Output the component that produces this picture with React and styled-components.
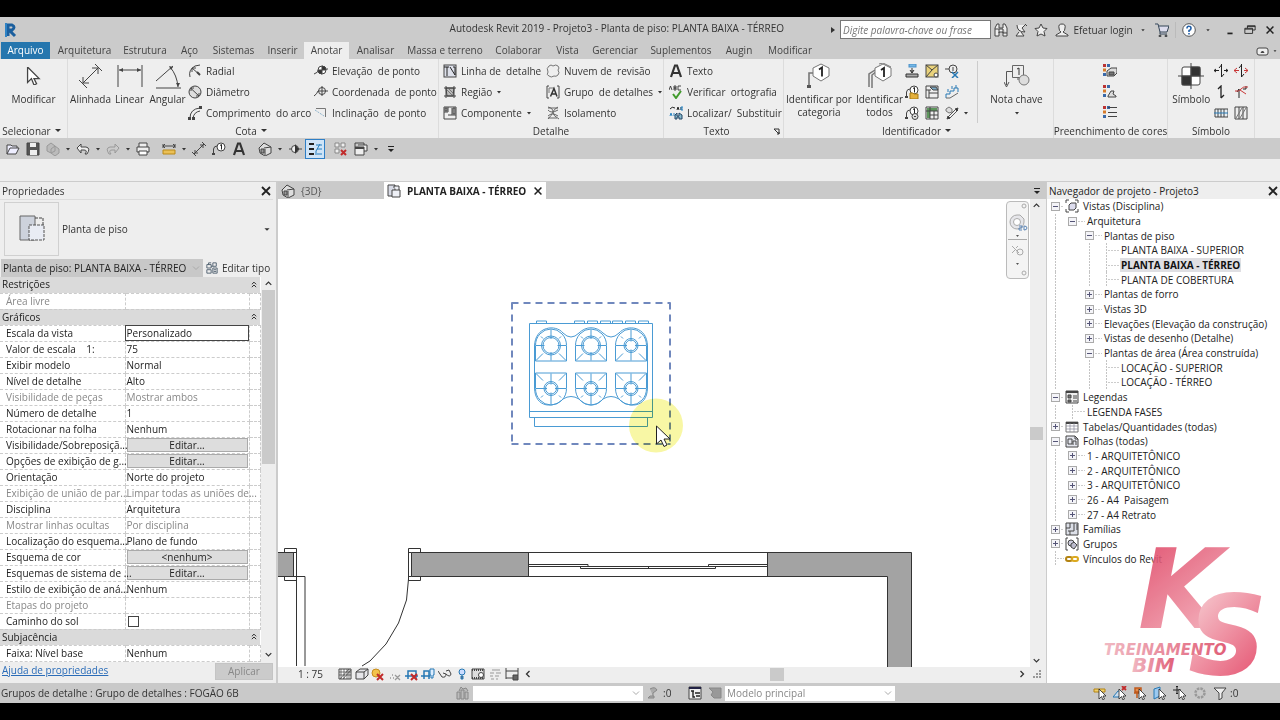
import React from 'react'
import styled, { createGlobalStyle, css } from 'styled-components'

const GlobalStyle = createGlobalStyle`
  * { box-sizing: border-box; }
  body { margin: 0; background: #000; }
  button, input, select { font: inherit; color: inherit; }
`
const Window = styled.div`
  display: flex;
  flex-direction: column;
  min-height: 100vh;
  padding: 17px 0;
  background: #000;
  color: #333;
  font: 10px/14px 'Open Sans', 'Noto Sans', sans-serif;
`
const Svg = styled.svg`
  display: block;
  flex: none;
  fill: none;
  stroke: #444;
`
const plainButton = css`
  border: 0;
  padding: 0;
  background: none;
  white-space: pre;
`

/* ---------- icons ---------- */

const node = <><path d="M1.500 12V7Q2 4 5 4" /><path d="M0 11h3v2H0z" fill="#444" stroke="none" /><circle cx="9" cy="5" r="4" fill="#fff" /><path d="M9.500 7.500v-5L8 3.500" stroke="#222" /></>
const swatches = <g stroke="none"><path d="M0 0h3v3H0z" fill="#b33" /><path d="M4 0h3v3H4zM0 9h3v3H0z" fill="#3968a8" /><path d="M0 4.500h3v3H0z" fill="#d67b2b" /></g>
const pointer = <path d="M6 3v10l2.500-2.500L10 14l1.500-1-1.500-3h3z" fill="#fff" stroke="#222" strokeWidth=".8" />

const icons = {
  down: <path d="M4 6h6L7 9z" fill="#333" stroke="none" />,
  tiny: <path d="M5 6h4L7 8.500z" fill="#333" stroke="none" />,
  close: <path d="M3 3l8 8M11 3l-8 8" stroke="#222" strokeWidth="1.800" />,
  chevDown: <path d="M4 5.500l3 3 3-3" stroke="#333" strokeWidth="1.300" />,
  chevUp: <path d="M4 8.500l3-3 3 3" stroke="#333" strokeWidth="1.300" />,
  chevLeft: <path d="M8.500 4l-3 3 3 3" stroke="#333" strokeWidth="1.300" />,
  chevRight: <path d="M5.500 4l3 3-3 3" stroke="#333" strokeWidth="1.300" />,
  paleDown: <path d="M4 5.500l3 3 3-3" stroke="#aaa" />,
  collapse: <path d="M4 6l3-3 3 3M4 10l3-3 3 3" stroke="#222" strokeWidth="1.300" />,
  play: <path d="M5 4l4 3-4 3z" fill="#333" stroke="none" />,
  cursor: <path d="M2 0v12l3-3 2 5 2-1-2-4h4z" fill="#fff" />,
  radial: <><path d="M2 13Q0 6 7 2l5-1M12 11L4 4M4 8V4h4" /><path d="M9 8l3 3" strokeWidth="2" /></>,
  diameter: <><circle cx="7" cy="7" r="6" fill="#ddd" /><path d="M2.500 3L11 11M3 6V3h3M11 8v3H8" /></>,
  arc: <><path d="M2 12Q2 3 12 2M5 12Q6 6 12 5" /><path d="M0 11h3v3H0zM4 11h3v3H4zM11 0h3v3h-3z" fill="#444" stroke="none" /></>,
  elevation: <><path d="M0 10Q4 9 5 5h9" /><circle cx="8" cy="6" r="4" fill="#fff" /><path d="M8 2v4h4a4 4 0 0 0-4-4zM8 10V6H4a4 4 0 0 0 4 4z" fill="#333" /></>,
  coord: <><path d="M0 11Q3 9 4 6h10M8 1v10" /><circle cx="8" cy="6" r="3.500" /></>,
  slope: <><path d="M1 4l9 6" stroke="#8fb4cc" strokeDasharray="2 1" /><path d="M2 2.500h9.500V11" stroke="#777" /></>,
  detailLine: <><rect x="1" y="1" width="12" height="12" fill="#dde0ea" /><path d="M1 3h5M4 3v9M7 3l5 8M10 3h2v8" stroke="#222" /></>,
  region: <><path d="M3 3h8l-1 8H4z" fill="#bbb" /><path d="M1 3h12M1 11h12M3 1v12M11 1v12" /><path d="M4 5l5 5M6 4l4 4" stroke="#777" /></>,
  component: <><path d="M1 1h12v12H1zM5 1v5H1M13 9H5M9 2v7" /><path d="M10 2h2v6h-2zM2 2h2v3H2z" fill="#bbb" /></>,
  cloud: <path d="M3 2q2-2 4 0 3-2 5 0 2 2 0 4 2 3 0 5-2 2-4 1-3 2-5 0-3-1-1-4Q0 4 3 2z" fill="#eee" stroke="#777" />,
  group: <><path d="M3 1H1v12h2M11 1h2v12h-2" /><path d="M3 8V3h5" stroke="#777" /><path d="M4.500 11.500L8 3.500l3 8M6 9h4" stroke="#333" strokeWidth="1.500" /></>,
  isolation: <path d="M2 1q5 1 5 5T13 13M2 4q3 4 10 0M2 10q4-4 10 0M12 1q-4 2-5 5T2 13M2 2h10M2 12h9" stroke="#666" />,
  letter: <><path d="M2 13L6 1.500h2L12 13M4 9h6" stroke="#333" strokeWidth="2.200" /></>,
  spell: <><path d="M0 5l1.500-4L3 5M5 1v4h2V3H5h2V1zM12 1H9v4h3" stroke="#333" strokeWidth=".9" /><path d="M4 9l3 4 5-7" stroke="#419b2c" strokeWidth="2" /></>,
  replace: <><path d="M1 3q2-3 5-1M8 4l1-3 1 3M12 1v3" stroke="#222" /><path d="M1 10l1-3 1 3M5 7v3M12 1h2v3h-2z" stroke="#2d87c4" /><path d="M6 13V9l2-2v3h2V7l3 2v4h-3v-2H8v2z" fill="#8bc" stroke="#246" /></>,
  tagCategory: <><path d="M3 23V10h6" strokeWidth="1.600" stroke="#777" /><path d="M15 1l8 4v8l-8 5-8-5V5z" fill="#fff" stroke="#777" /><path d="M13 6.500l3-2v9" stroke="#222" strokeWidth="1.800" /><path d="M1 22h4v3H1z" fill="#555" stroke="none" /></>,
  tagAll: <><path d="M2 24V11l6-4M5 25V12l5-4" strokeWidth="1.500" stroke="#777" /><path d="M16 1l8 4v8l-8 5-8-5V5zM12 1l4-1 8 4" fill="#fff" stroke="#777" /><path d="M14 7l3-2v9" stroke="#222" strokeWidth="1.800" /></>,
  keynote: <><path d="M2.500 22V8.500H8M0 19l2.500 5L5 19M14 14v3" stroke="#555" /><path d="M8.500 2.500h11v12h-11z" fill="#eee" stroke="#666" /><path d="M13 6l2-1v7" stroke="#333" /><circle cx="20" cy="17" r="5" fill="#ddd" stroke="#777" /></>,
  aligned: <path d="M5 20L20 5M5 14v6h6M14 5h6v6M1 17l8 8M17 1l7 7" />,
  linear: <><path d="M1 2v22M25 2v22M2 7h22" /><path d="M2 7l4-2v4zM24 7l-4-2v4z" fill="#444" stroke="none" /></>,
  angular: <><path d="M1 18L18 3M1 25h25M15 4q7 8 8 20" /><path d="M14 3l4 1-2 3zM23 24l-2-4h4z" fill="#444" stroke="none" /></>,
  beam: <><rect x="4" y="0" width="7" height="3" fill="#74b7e5" stroke="#4a90c8" /><path d="M7 4v5M5 6l2 3 2-3M1 10h12v3H1z" fill="#aaa" stroke="#333" /></>,
  material: <><rect x="1" y="1" width="12" height="12" fill="#e9d27b" /><path d="M1 1l6 5 6-5M1 13l6-7" /><circle cx="11" cy="11" r="2" fill="#fff" /></>,
  multi: <><path d="M0 5h5" /><circle cx="8" cy="5" r="4" fill="#eee" /><path d="M8 3v4" /><path d="M7 8l6 6M13 8l-6 6" stroke="#2678b4" strokeWidth="1.500" /></>,
  tagFolder: <>{node}<path d="M5 8h3l1 1h4v5H5z" fill="#e4b03c" stroke="#a67a15" /></>,
  tagSearch: <>{node}<circle cx="10" cy="10.500" r="3" fill="#ddd" /><path d="M9 10.500h2" /></>,
  area: <><path d="M1 1h12v12H1zM1 5h5M4 5v8M4 8h9" /><path d="M5 2h6l2 3H8z" fill="#7cabc8" /></>,
  schedule: <><path d="M1 1h12v12H1z" fill="#eee" /><path d="M2 2h10v3H2zM2 5h3v7H2z" fill="#5d965c" stroke="none" /><path d="M1 5h12M5 1v12M9 5v8M5 9h8" /></>,
  stairs: <><path d="M1 13V9h4V6h4V3h4v4M3 7V4M7 4V1M11 3V0" stroke="#2678b4" /><path d="M1 13h4l8-5" stroke="#666" /></>,
  path: <><path d="M4 13l9-9M3 11l8-8" stroke="#555" /><path d="M1 3l3-2 3 2v3L4 7 1 5z" fill="#ddd" stroke="#777" /><path d="M2 13l1-3 2 2zM13 2l-3 1 2 2z" fill="#333" /></>,
  colorDuct: <>{swatches}<path d="M4 7l4-3h6v5l-3 3H4z" fill="#ddd" /><path d="M6 8h5v3H6z" fill="#777" /></>,
  colorPipe: <>{swatches}<path d="M5 11l3-5h3l-1 3 3 2v1H5z" fill="#ddd" /></>,
  colorLegend: <>{swatches}<path d="M5 1.500h9M5 6.500h9M5 10.500h9" /></>,
  symbol: <><rect x="4" y="4" width="18" height="18" rx="2" fill="#fff" /><path d="M13 4h9v9h-9zM4 13h9v9H4z" fill="#333" /><path d="M13 0v26M0 13h26" /></>,
  span: <path d="M7.500 0v13M5 4l2.500-3M10 10l-2.500 3M0 6.500h5M10 6.500h4M2 5L0 6.500 2 8M12 5l2 1.500L12 8" stroke="#222" />,
  spanRed: <><path d="M7.500 0v13M5 4l2.500-3M10 10l-2.500 3" stroke="#222" /><path d="M0 6.500h5M10 6.500h4M3 4L0 6.500 3 9M11 4l3 2.500L11 9" stroke="#c83737" /></>,
  beamArrow: <path d="M7 13V1L4 4M7 13l3-3" stroke="#222" strokeWidth="1.300" />,
  stairArrow: <><path d="M5 13V4l-2 3M12 1v3H9" stroke="#222" /><path d="M1 6q4 1 6-2t7-2M6 5l6 4" stroke="#c83737" /></>,
  fabric: <><path d="M1 3h13v8H1z" fill="#e8f0f5" /><path d="M4 3v8M7 3v8M10 3v8" /><path d="M0 7h14" stroke="#2678b4" /></>,
  fabricArea: <><path d="M1 1h12v12H1zM5 1v12M9 1v12" /><path d="M2 12L8 2M6 12l6-10" stroke="#777" /></>,
  open: <path d="M1 12V3h4l1 1h5v2M1 12l3-6h9l-3 6z" fill="#eef" />,
  save: <><path d="M1 1h12v12H1z" fill="#555" /><path d="M4 1h6v4H4zM4 8h7v5H4z" fill="#eee" stroke="none" /></>,
  sync: <path d="M1 4l4-3 4 3v5l-4 2-4-2zM5 7l4-3 4 3v4l-4 3-4-3z" fill="#bbb" stroke="#999" />,
  undo: <path d="M1 6l4-4v3h5q5 1 1 7H9q3-4-1-4H5v3z" fill="#eee" />,
  redo: <path d="M13 6L9 2v3H4Q-1 6 3 12h2Q2 8 6 8h3v3z" stroke="#999" />,
  print: <><path d="M3 5V1h8v4M1 5h12v5H1z" fill="#eee" /><path d="M3 9h8v4H3z" fill="#fff" /></>,
  measure: <><path d="M1 4h12M1 2v4M13 2v4M3 2L1 4l2 2M11 2l2 2-2 2" /><path d="M1 8h12v4H1z" fill="#ebc056" stroke="#b98918" /></>,
  dim: <path d="M2 12L12 2M3 8v3h3M8 3h3v3M0 10l4 4M10 0l4 4" />,
  tag: node,
  house: <><path d="M1 6l5-5 7 4v6l-6 3-5-3z" fill="#ddd" /><path d="M6 6l7-1M7 7v6" /><path d="M3 7h3v4H3z" fill="#999" /></>,
  section: <><path d="M1 7h3M10 7h4" /><circle cx="7" cy="7" r="3.500" fill="#eee" /><path d="M7 2l4 5-4 5z" fill="#333" stroke="none" /></>,
  thin: <><path d="M1 2h5M1 7h5M1 12h5" stroke="#222" strokeWidth="2" /><path d="M8 13V9l4-7M9 7h5M8 3h6M9 12h5" stroke="#257fc0" /></>,
  hidden: <><path d="M1 1h4v4H1zM7 1h4v4H7zM1 7h4v4H1z" fill="#eee" stroke="#888" /><path d="M7 8l5 5M12 8l-5 5" stroke="#c12b2b" strokeWidth="2" /></>,
  windows: <><path d="M1 5V1h9v4" /><path d="M1 5h9v8H1zM4 3h9v6h-3" fill="#eee" /><path d="M1 6h9" strokeWidth="2" /></>,
  customize: <><path d="M4 4.500h6" stroke="#222" /><path d="M4 7h6l-3 3z" fill="#222" stroke="none" /></>,
  binoculars: <path d="M1 13V5l2-4h2v4h4V1h2l2 4v8H9V9H5v4zM1 6h4v4M9 6v4h4M5 6h4" fill="#eee" />,
  satellite: <path d="M3 2q0 7 8 7L8 5l3-3M5 9l-3 4h8l-3-4M11 1l2 2" fill="#eee" />,
  star: <path d="M7 1l2 4 4 .5-3 3 1 4.500-4-2-4 2 1-4.500-3-3L5 5z" fill="#eee" />,
  user: <path d="M7 1q-4 0-3 4 0 3 2 4l-5 3v1h12v-1L8 9q2-1 2-4 1-4-3-4z" fill="#eee" />,
  cart: <><path d="M0 1h3l2 8h7l2-6H4M5 9v2h7" fill="#dde" stroke="#345" /><circle cx="5" cy="13" r="1" fill="#345" /><circle cx="11" cy="13" r="1" fill="#345" /></>,
  help: <><circle cx="7" cy="7" r="6.300" fill="#fff" stroke="#555" /><path d="M5 5.500Q5 3 7 3.200q2 0 2 2Q9 7 7 7.500V9M7 10v1.500" stroke="#2360a8" strokeWidth="1.600" /></>,
  minimize: <path d="M4 11h6" stroke="#222" strokeWidth="2" />,
  restore: <path d="M4 5V2h9v5h-3M1 5h9v6H1zM1 6h9M4 3h9" stroke="#222" />,
  ribbonToggle: <><rect x="1" y="4" width="11" height="7" rx="2" fill="#eee" /><path d="M5 8.500h3L6.500 7z" fill="#222" /></>,
  editType: <path d="M1 3h5v4H1zM1 9h5v4H1zM8 1h4v4H8zM8 7h5v6H8zM3 3V1h3M6 5h2M9 9h3M9 11h3" stroke="#456" />,
  sheet: <><path d="M1 1h7v11H1z" fill="#d8dbe6" /><path d="M7 4V2h5v4M5 6h8v7H5z" fill="#eef0f6" /></>,
  views: <><path d="M4 1H1v3M10 1h3v3M4 13H1v-3M10 13h3v-3" /><path d="M4 6l2-2h5v5l-2 2H4z" fill="#dde" /></>,
  legend: <><path d="M1 1h12v12H1z" fill="#eee" /><path d="M1 2h12" strokeWidth="2" /><path d="M3 5h3v3H3zM3 10h3v2H3z" fill="#777" /><path d="M8 6h4M8 8h4M8 11h4" /></>,
  grid: <><path d="M1 2h12v10H1z" fill="#fff" stroke="#777" /><path d="M1 3h12" strokeWidth="2" /><path d="M1 6h12M1 9h12M5 3v9M9 3v9" stroke="#889" strokeWidth=".7" /></>,
  sheets: <><path d="M1 2h9l3 3v8H1z" fill="#e4e6ee" /><path d="M3 10V5h4v5zM8 11V7h3v4M10 2v3h3" /></>,
  family: <path d="M1 1h12v12H1zM5 1v5H1M9 1v8H5v4M12 2v6M3 9h2" fill="#dde0e8" />,
  groups: <><path d="M3 1H1v12h2M11 1h2v12h-2" /><circle cx="6" cy="6" r="3" fill="#ccd" /><path d="M6 7l3-2 3 3-3 4-3-2z" fill="#bbc" /></>,
  link: <><rect x="1" y="5" width="6" height="4" rx="2" stroke="#b38312" strokeWidth="2" /><rect x="7" y="5" width="6" height="4" rx="2" stroke="#dba91f" strokeWidth="2" /></>,
  detailLevel: <><path d="M1 2h12v10H1z" fill="#fff" /><path d="M1 5h12M1 8h12M3 2v10M6 2v10M9 2v10M11 2v10M2 12L11 2M5 12l8-9" strokeWidth=".7" /></>,
  box: <path d="M1 5l4-3h8v6l-4 4H1zM1 5h8v7M9 5l4-3" fill="#e6e6ea" />,
  sun: <><circle cx="5" cy="6" r="4" fill="#f2c24a" stroke="#c88d1c" /><path d="M6 7l6 6M12 7l-6 6" stroke="#c12b2b" strokeWidth="2" /></>,
  shadow: <path d="M2 11h1M5 11h1M4 8h1M7 8l5 5M12 8l-5 5" stroke="#999" strokeWidth="1.300" />,
  crop: <><path d="M0 9h13M3 12V4h8v8" stroke="#2678b4" strokeWidth="1.500" /><path d="M6 7l6 6M12 7l-6 6" stroke="#c12b2b" strokeWidth="2" /></>,
  cropShow: <><path d="M0 9h9M3 12V4h5v8" stroke="#2678b4" strokeWidth="1.500" /><path d="M9 2h4v6h-1v3h-2V8H9z" fill="#def" stroke="#2678b4" /></>,
  glasses: <path d="M0 4l4 6q4 1 4-3L5 6M8 7q4 4 5 0l-2-4-3 1" />,
  bulb: <><circle cx="7" cy="5" r="3" fill="#cdf" stroke="#2678b4" /><path d="M6 9h2v3H6z" fill="#678" stroke="#2678b4" /></>,
  film: <><path d="M1 2h12v10H1z" fill="#ddd" /><path d="M1 3h12M1 11h12" strokeDasharray="1 1" strokeWidth="2" /><circle cx="10" cy="8" r="2.500" fill="#fff" /></>,
  analytic: <path d="M4 3h8M2 6h4M8 6h5M2 9h3M7 9h4M3 12h3M8 12h2" stroke="#999" />,
  constraint: <><path d="M1 1v11M13 1v7M1 4h12M1 11h7" /><path d="M8 8h5v5H8z" fill="#666" /></>,
  worksets: <path d="M1 13V6h3v7zM5 13V4h3v9zM9 13V6h3v7zM3 5l2-4 2 2 3-1 2 3" stroke="#888" fill="#bbb" />,
  editable: <path d="M4 3q5-3 7 1L7 7v3M2 12h6v-2H4z" stroke="#888" fill="#aaa" />,
  options: <><path d="M1 1h12v12H1z" fill="#eee" /><path d="M1 2h12" stroke="#224" strokeWidth="2" /><path d="M3 5h3M5 5v6h2M7 7h5M8 10h4" stroke="#222" strokeWidth="1.400" /></>,
  optionsOff: <path d="M1 2h12v10H6l-3-3 2-3z" fill="#999" stroke="#888" />,
  selLink: <><path d="M1 3h11v3H1z" fill="#f2d16a" stroke="#b38312" />{pointer}</>,
  selUnder: <><path d="M0 11l5-6h3L6 11z" fill="#cde" stroke="#2678b4" /><path d="M9 0l4 4M13 0L9 4" stroke="#c12b2b" strokeWidth="1.800" />{pointer}</>,
  selPin: <><path d="M2 2h6v4H2zM1 7h8M4 7v5" fill="#e88d4a" stroke="#c05a1c" strokeWidth="1.500" />{pointer}</>,
  selFace: <><path d="M1 3l6-2v9l-6 3z" fill="#9ccaf0" stroke="#2678b4" />{pointer}</>,
  selDrag: <><path d="M4 0v8M0 4h8M3 1l1-1 1 1M3 7l1 1 1-1" stroke="#222" />{pointer}</>,
  gear: <circle cx="7" cy="7" r="4.500" stroke="#999" strokeWidth="2.500" strokeDasharray="2.500 1" />,
  filter: <path d="M1 2h12L9 7v5l-3 2V7z" fill="#eee" />,
  grip: <path d="M10 4h2M7 7h2M10 7h2M4 10h2M7 10h2M10 10h2" stroke="#999" strokeWidth="2" />,
  corner: <path d="M5 5h5v5M5 5l5 5M8 10h2V8" stroke="#333" />,
}

const Icon = ({ name, size = 14, box = 14 }) => (
  <Svg width={size} height={size} viewBox={`0 0 ${box} ${box}`} aria-hidden="true">{icons[name]}</Svg>
)

/* ---------- title bar ---------- */

const TitleBar = styled.header`
  display: flex;
  align-items: center;
  height: 25px;
  padding-left: 4px;
  background: #cbcbcb;
`
const Title = styled.h1`
  flex: 1;
  margin: 0;
  padding: 0 42px 4px 0;
  text-align: right;
  font-size: 10px;
  font-weight: 400;
`
const Search = styled.input`
  width: 151px;
  height: 19px;
  padding: 0 2px;
  border: 1px solid #777;
  background: #fff;
  font-style: italic;
  &::placeholder { color: #777; }
`
const TitleButton = styled.button`
  ${plainButton}
  display: flex;
  align-items: center;
  justify-content: center;
  gap: 4px;
  width: ${p => p.$w || 20}px;
  height: 22px;
`
const TitleRule = styled.div`
  width: 1px;
  height: 16px;
  background: #bbb;
`

/* ---------- ribbon ---------- */

const TabRow = styled.nav`
  display: flex;
  height: 17px;
  padding-left: 1px;
  background: #cbcbcb;
`
const Tab = styled.button`
  ${plainButton}
  width: ${p => p.$w}px;
  margin-right: ${p => (p.$file ? 2 : 0)}px;
  padding-bottom: 2px;
  background: ${p => (p.$file ? '#2576ae' : p.$active ? '#eee' : 'none')};
  color: ${p => (p.$file ? '#fff' : '#444')};
`
const Spacer = styled.div`
  flex: 1;
`
const Ribbon = styled.div`
  display: flex;
  height: 79px;
  background: #eee;
`
const Panel = styled.section`
  display: flex;
  flex-direction: column;
  width: ${p => p.$w}px;
  padding-top: 2px;
  border-right: 1px solid #dcdcdc;
`
const PanelBody = styled.div`
  display: flex;
  height: 62px;
  padding-left: ${p => p.$pad || 0}px;
`
const PanelName = styled.div`
  display: flex;
  justify-content: center;
  height: 15px;
  line-height: 17px;
  white-space: nowrap;
`
const Launcher = styled.button`
  ${plainButton}
  margin-left: auto;
`
const Big = styled.button`
  ${plainButton}
  display: flex;
  flex-direction: column;
  align-items: center;
  width: ${p => p.$w}px;
  padding-top: 2px;
  line-height: 13px;
`
const BigArt = styled.span`
  display: grid;
  place-items: center;
  height: 26px;
  margin-bottom: 4px;
`
const Column = styled.div`
  display: grid;
  grid-template-rows: repeat(3, 1fr);
  align-items: center;
  width: ${p => p.$w}px;
`
const Small = styled.button`
  ${plainButton}
  display: flex;
  align-items: center;
`
const SmallText = styled.span`
  padding-left: 4px;
`
const Divider = styled.div`
  width: 1px;
  margin: 0 2px;
  background: #ccc;
`
const QuickBar = styled.div`
  display: flex;
  align-items: center;
  height: 21px;
  padding-left: 3px;
  background: #cbcbcb;
`
const Quick = styled.button`
  ${plainButton}
  display: flex;
  align-items: center;
  justify-content: center;
  width: ${p => (p.$arrow ? 10 : 20)}px;
  height: 20px;
  ${p => p.$active && css`
    background: #cfe4f7;
    border: 1px solid #2f7fc6;
  `}
`
const Gap = styled.div`
  width: 6px;
`
const OptionsBar = styled.div`
  height: 23px;
  background: #eee;
  border-bottom: 1px solid #ccc;
`

const tabs = [
  ['Arquivo', 49], ['Arquitetura', 65], ['Estrutura', 56], ['Aço', 33], ['Sistemas', 55],
  ['Inserir', 43], ['Anotar', 45], ['Analisar', 53], ['Massa e terreno', 86], ['Colaborar', 61],
  ['Vista', 37], ['Gerenciar', 58], ['Suplementos', 74], ['Augin', 42], ['Modificar', 60],
]
const quick = [
  'open', 'save', 'sync', 'tiny', 'undo', 'tiny', 'redo', 'tiny', 'print', '', 'measure', 'tiny', 'dim', 'tag',
  'letter', '', 'house', 'tiny', 'section', 'thin', '', 'hidden', 'windows', 'tiny', 'customize',
]

const BigTool = ({ icon, w, children, arrow, size = 26, box = 26 }) => (
  <Big $w={w}>
    <BigArt><Icon name={icon} size={size} box={box} /></BigArt>
    <span>{children}</span>
    {arrow && <Icon name="tiny" />}
  </Big>
)
const Tools = ({ w, items }) => (
  <Column $w={w}>
    {items.map(([icon, label, arrow]) => (
      <Small key={icon} aria-label={label || icon}>
        <Icon name={icon} />
        {label && <SmallText>{label}</SmallText>}
        {arrow && <Icon name="tiny" />}
      </Small>
    ))}
  </Column>
)

const TopBars = () => (
  <>
    <TitleBar>
      <Svg width="14" height="16" viewBox="0 0 14 16" role="img" aria-label="Revit">
        <path d="M4 14V3h4q4 2 0 5H5l6 6" stroke="#1b5f9e" strokeWidth="3" />
        <path d="M2 1v14" stroke="#2f83c5" strokeWidth="2" />
      </Svg>
      <Title>Autodesk Revit 2019 - Projeto3 - Planta de piso: PLANTA BAIXA - TÉRREO</Title>
      <Icon name="play" />
      <Search aria-label="Pesquisar" placeholder="Digite palavra-chave ou frase" />
      {['binoculars', 'satellite', 'star'].map(n => <TitleButton key={n} aria-label={n}><Icon name={n} /></TitleButton>)}
      <TitleButton $w={86}><Icon name="user" />Efetuar login</TitleButton>
      <TitleButton $w={12} aria-label="Conta"><Icon name="tiny" size={12} /></TitleButton>
      <TitleButton $w={26} aria-label="Loja"><Icon name="cart" /></TitleButton>
      <TitleRule />
      <TitleButton $w={26} aria-label="Ajuda"><Icon name="help" /></TitleButton>
      <TitleButton $w={12} aria-label="Menu de ajuda"><Icon name="tiny" size={12} /></TitleButton>
      <Gap />
      {['minimize', 'restore', 'close'].map(n => <TitleButton key={n} aria-label={n}><Icon name={n} size={12} /></TitleButton>)}
    </TitleBar>
    <TabRow>
      {tabs.map(([name, w]) => (
        <Tab key={name} $w={w} $file={name === 'Arquivo'} $active={name === 'Anotar'}>{name}</Tab>
      ))}
      <Spacer />
      <Small aria-label="Minimizar faixa"><Icon name="ribbonToggle" /><Icon name="tiny" size={10} /></Small>
    </TabRow>
    <Ribbon>
      <Panel $w={68}>
        <PanelBody><BigTool icon="cursor" w={68} size={18} box={14}>Modificar</BigTool></PanelBody>
        <PanelName>Selecionar<Icon name="down" /></PanelName>
      </Panel>
      <Panel $w={371}>
        <PanelBody $pad={1}>
          <BigTool icon="aligned" w={43}>Alinhada</BigTool>
          <BigTool icon="linear" w={35}>Linear</BigTool>
          <BigTool icon="angular" w={41}>Angular</BigTool>
          <Tools w={126} items={[['radial', 'Radial'], ['diameter', 'Diâmetro'], ['arc', 'Comprimento  do arco']]} />
          <Tools w={124} items={[['elevation', 'Elevação  de ponto'], ['coord', 'Coordenada  de ponto'], ['slope', 'Inclinação  de ponto']]} />
        </PanelBody>
        <PanelName>Cota<Icon name="down" /></PanelName>
      </Panel>
      <Panel $w={225}>
        <PanelBody $pad={4}>
          <Tools w={103} items={[['detailLine', 'Linha de  detalhe'], ['region', 'Região', true], ['component', 'Componente', true]]} />
          <Tools w={117} items={[['cloud', 'Nuvem de  revisão'], ['group', 'Grupo  de detalhes', true], ['isolation', 'Isolamento']]} />
        </PanelBody>
        <PanelName>Detalhe</PanelName>
      </Panel>
      <Panel $w={120}>
        <PanelBody $pad={5}>
          <Tools w={114} items={[['letter', 'Texto'], ['spell', 'Verificar  ortografia'], ['replace', 'Localizar/  Substituir']]} />
        </PanelBody>
        <PanelName>
          <Launcher as="span" aria-hidden="true" />
          Texto
          <Launcher aria-label="Configurações de texto"><Icon name="corner" /></Launcher>
        </PanelName>
      </Panel>
      <Panel $w={270}>
        <PanelBody>
          <BigTool icon="tagCategory" w={70}>{'Identificar por\ncategoria'}</BigTool>
          <BigTool icon="tagAll" w={51}>{'Identificar\ntodos'}</BigTool>
          <Tools w={20} items={[['beam'], ['tagFolder'], ['tagSearch']]} />
          <Tools w={20} items={[['material'], ['area'], ['schedule']]} />
          <Tools w={30} items={[['multi'], ['stairs'], ['path', '', true]]} />
          <Divider />
          <BigTool icon="keynote" w={73} arrow>Nota chave</BigTool>
        </PanelBody>
        <PanelName>Identificador<Icon name="down" /></PanelName>
      </Panel>
      <Panel $w={114}>
        <PanelBody $pad={49}>
          <Tools w={20} items={[['colorDuct'], ['colorPipe'], ['colorLegend']]} />
        </PanelBody>
        <PanelName>Preenchimento de cores</PanelName>
      </Panel>
      <Panel $w={87}>
        <PanelBody>
          <BigTool icon="symbol" w={47}>Símbolo</BigTool>
          <Tools w={20} items={[['span'], ['beamArrow'], ['fabric']]} />
          <Tools w={20} items={[['spanRed'], ['stairArrow'], ['fabricArea']]} />
        </PanelBody>
        <PanelName>Símbolo</PanelName>
      </Panel>
    </Ribbon>
    <QuickBar>
      {quick.map((n, i) => (n
        ? <Quick key={i} $arrow={n === 'tiny'} $active={n === 'thin'} aria-label={n}><Icon name={n} /></Quick>
        : <Gap key={i} />))}
    </QuickBar>
    <OptionsBar />
  </>
)

/* ---------- properties ---------- */

const Main = styled.main`
  display: flex;
  flex: 1;
  background: #eee;
`
const Properties = styled.aside`
  display: flex;
  flex-direction: column;
  width: 278px;
  border-right: 2px solid #ccc;
  padding-right: 3px;
`
const PaneTitle = styled.h2`
  display: flex;
  align-items: center;
  justify-content: space-between;
  height: 17px;
  margin: 0;
  padding-left: 2px;
  font-size: 10px;
  font-weight: 400;
`
const IconButton = styled.button`
  ${plainButton}
`
const TypePicker = styled.button`
  ${plainButton}
  display: flex;
  align-items: center;
  gap: 3px;
  height: 59px;
  padding-left: 4px;
  border-top: 1px solid #ddd;
`
const TypePreview = styled.span`
  display: grid;
  place-items: center;
  width: 55px;
  height: 54px;
  border: 1px solid #d0d0d0;
`
const FilterRow = styled.div`
  display: flex;
  align-items: center;
  height: 19px;
  padding-left: 1px;
  gap: 3px;
`
const SelectBox = styled.label`
  display: flex;
  align-items: center;
  width: ${p => p.$w}px;
  height: ${p => p.$h}px;
  background: ${p => p.$bg};
  color: ${p => p.$color || '#222'};
`
const Select = styled.select`
  flex: 1;
  min-width: 0;
  height: 100%;
  padding: 0 2px;
  border: 0;
  background: none;
  appearance: none;
`
const TableArea = styled.div`
  display: flex;
  gap: 1px;
  height: 384px;
`
const Table = styled.table`
  width: 260px;
  table-layout: fixed;
  border-collapse: collapse;
  background: #fff;
  color: #222;
  line-height: 13px;
`
const Group = styled.th`
  height: 16px;
  padding: 0 0 0 2px;
  background: #dadada;
  text-align: left;
  font-weight: 400;
`
const GroupToggle = styled.td`
  padding: 0;
  background: #dadada;
`
const Name = styled.th`
  height: 16px;
  padding: 0 0 0 6px;
  border: 1px dashed #ccc;
  border-left: 0;
  text-align: left;
  white-space: pre;
  font-weight: 400;
  color: ${p => (p.$off ? '#888' : '#222')};
`
const Value = styled.td`
  height: 16px;
  padding: 0 1px;
  border: 1px dashed #ccc;
  white-space: nowrap;
  color: ${p => (p.$off ? '#888' : '#222')};
  outline: ${p => (p.$focus ? '1px solid #444' : 'none')};
  outline-offset: -1px;
`
const CellButton = styled.button`
  display: block;
  width: 100%;
  height: 14px;
  padding: 0;
  border: 1px solid #aaa;
  background: #ddd;
  line-height: 11px;
`
const Check = styled.input`
  display: block;
  appearance: none;
  width: 11px;
  height: 11px;
  margin: 0 0 0 1px;
  border: 1px solid #444;
  background: #fff;
`
const Scroll = styled.div`
  display: flex;
  flex-direction: ${p => (p.$row ? 'row' : 'column')};
  align-items: center;
  justify-content: space-between;
  ${p => (p.$row ? 'flex: 1;' : 'width: 13px;')}
  background: #eee;
`
const Thumb = styled.div`
  width: ${p => p.$w}px;
  height: ${p => p.$h}px;
  background: #cacaca;
`
const PropsFooter = styled.footer`
  display: flex;
  align-items: center;
  justify-content: space-between;
  height: 20px;
  padding-left: 2px;
`
const Help = styled.a`
  padding-bottom: 3px;
  color: #2a6cb8;
  text-decoration: underline;
`
const Apply = styled.button`
  width: 58px;
  height: 17px;
  padding: 0;
  border: 1px solid #c4c4c4;
  background: #cbcbcb;
  color: #888;
`

const rows = [
  { group: 'Restrições' },
  { name: 'Área livre', value: '', off: true },
  { group: 'Gráficos' },
  { name: 'Escala da vista', value: 'Personalizado', focus: true },
  { name: 'Valor de escala    1:', value: '75' },
  { name: 'Exibir modelo', value: 'Normal' },
  { name: 'Nível de detalhe', value: 'Alto' },
  { name: 'Visibilidade de peças', value: 'Mostrar ambos', off: true },
  { name: 'Número de detalhe', value: '1' },
  { name: 'Rotacionar na folha', value: 'Nenhum' },
  { name: 'Visibilidade/Sobreposiçã...', button: 'Editar...' },
  { name: 'Opções de exibição de g...', button: 'Editar...' },
  { name: 'Orientação', value: 'Norte do projeto' },
  { name: 'Exibição de união de par...', value: 'Limpar todas as uniões de...', off: true },
  { name: 'Disciplina', value: 'Arquitetura' },
  { name: 'Mostrar linhas ocultas', value: 'Por disciplina', off: true },
  { name: 'Localização do esquema...', value: 'Plano de fundo' },
  { name: 'Esquema de cor', button: '<nenhum>' },
  { name: 'Esquemas de sistema de ...', button: 'Editar...' },
  { name: 'Estilo de exibição de aná...', value: 'Nenhum' },
  { name: 'Etapas do projeto', value: '', off: true },
  { name: 'Caminho do sol', check: true },
  { group: 'Subjacência' },
  { name: 'Faixa: Nível base', value: 'Nenhum' },
]

const PropertyRow = ({ row }) => {
  if (row.group) {
    return (
      <tr>
        <Group colSpan={2} scope="colgroup">{row.group}</Group>
        <GroupToggle><Icon name="collapse" size={10} /></GroupToggle>
      </tr>
    )
  }
  return (
    <tr>
      <Name scope="row" $off={row.off}>{row.name}</Name>
      <Value $off={row.off} $focus={row.focus}>
        {row.button && <CellButton>{row.button}</CellButton>}
        {row.check && <Check type="checkbox" aria-label={row.name} />}
        {row.value}
      </Value>
      <Value />
    </tr>
  )
}

const PropertiesPane = () => (
  <Properties>
    <PaneTitle>Propriedades<IconButton aria-label="Fechar"><Icon name="close" /></IconButton></PaneTitle>
    <TypePicker>
      <TypePreview>
        <Svg width="26" height="28" viewBox="0 0 26 28">
          <path d="M1 1h15v24H1z" fill="#cdd2dc" stroke="#666" />
          <path d="M16 3h8v7" strokeDasharray="3 1" />
          <path d="M10 10h15v15H10z" fill="#e9ecf4" stroke="#555" strokeDasharray="3 1" />
        </Svg>
      </TypePreview>
      Planta de piso
      <Spacer />
      <Icon name="down" size={12} />
    </TypePicker>
    <FilterRow>
      <SelectBox $w={202} $h={18} $bg="#c8c8c8">
        <Select aria-label="Filtro de propriedades"><option>Planta de piso: PLANTA BAIXA - TÉRREO</option></Select>
        <Icon name="paleDown" />
      </SelectBox>
      <Small><Icon name="editType" size={12} /><SmallText>Editar tipo</SmallText></Small>
    </FilterRow>
    <TableArea>
      <Table>
        <colgroup><col width="125" /><col width="124" /><col width="11" /></colgroup>
        <tbody>{rows.map((row, i) => <PropertyRow key={i} row={row} />)}</tbody>
      </Table>
      <Scroll>
        <div><Icon name="chevUp" size={13} /><Thumb $w={13} $h={174} /></div>
        <Icon name="chevDown" size={13} />
      </Scroll>
    </TableArea>
    <PropsFooter>
      <Help href="#ajuda">Ajuda de propriedades</Help>
      <Apply disabled>Aplicar</Apply>
    </PropsFooter>
  </Properties>
)

/* ---------- drawing view ---------- */

const View = styled.section`
  display: flex;
  flex: 1;
  min-width: 0;
  flex-direction: column;
`
const ViewTabs = styled.div`
  display: flex;
  height: 17px;
  padding-right: 2px;
  background: #cacaca;
`
const ViewTab = styled.button`
  ${plainButton}
  display: flex;
  align-items: center;
  gap: 6px;
  width: ${p => p.$w}px;
  padding-left: 3px;
  background: ${p => (p.$active ? '#fff' : 'none')};
  font-weight: ${p => (p.$active ? 700 : 400)};
  color: ${p => (p.$active ? '#222' : '#555')};
`
const ViewBody = styled.div`
  display: flex;
  flex: 1;
  padding-right: 3px;
`
const Canvas = styled.div`
  position: relative;
  flex: 1;
  background: #fff;
`
const Drawing = styled.svg`
  position: absolute;
  width: 100%;
  height: 100%;
  fill: none;
`
const NavBar = styled.div`
  position: absolute;
  top: 2px;
  right: 1px;
  display: flex;
  flex-direction: column;
  align-items: center;
  width: 23px;
  height: 78px;
  border: 1px solid #bbb;
  border-radius: 4px;
  background: #f4f4f4;
`
const ViewBar = styled.div`
  display: flex;
  align-items: center;
  height: 14px;
  margin-bottom: 2px;
  padding-right: 3px;
`
const Scale = styled.span`
  width: 60px;
  padding-left: 20px;
  white-space: nowrap;
`
const ViewTools = styled.div`
  display: grid;
  grid-template-columns: repeat(12, 1fr);
  width: 200px;
`

const Burner = ({ x, y, r, flip }) => (
  <g transform={`translate(${x} ${y}) scale(1 ${flip ? -1 : 1})`}>
    <path d="M-15.500 15.500V0a15.500 16.500 0 0 1 31 0V15.500z" />
    <circle r={r} />
    <circle r={r - 1.5} />
    <path d={`M-15 0H${-r + 3}M15 0H${r - 3}M0 -16V${-r + 3}M0 15V${r - 3}M-15 15l7-7M15 15l-7-7M-10 -9l2 2M10 -9l-2 2`} />
  </g>
)

const Plan = () => (
  <Drawing role="img" aria-label="Planta baixa com fogão">
    <g transform="translate(-278 -199)">
      <g stroke="#4a9bd4">
        <path d="M529.500 323.500h123v94h-123zM529.500 411.500h123M534.500 417.500v9h113v-9" />
        {[536.5, 574.5, 587.5, 600.5, 612.5, 625.5, 638.5].map(x => <path key={x} d={`M${x} 323v-2h10v2`} />)}
        <path d="M534.500 388V346C535 326 556 324 563 333Q571 341 579 333C586 326 596 326 603 333Q611 341 619 333C627 324 647 326 647.500 346V388C647 409 627 408 619 399Q611 394 603 399C596 407 586 407 579 399Q571 394 563 399C555 408 535 409 534.500 388" />
        <Burner x={551} y={345.5} r={9.5} />
        <Burner x={591} y={345.5} r={9.5} />
        <Burner x={631} y={345.5} r={7} />
        <Burner x={551} y={388.5} r={7} flip />
        <Burner x={591} y={388.5} r={7} flip />
        <Burner x={631} y={388.5} r={7} flip />
      </g>
      <path d="M511.500 303h159M511.500 444h159" stroke="#7088bd" strokeWidth="2" strokeDasharray="7 5" />
      <path d="M512 302.500v142M670 302.500v142" stroke="#7088bd" strokeWidth="2" strokeDasharray="7 5" />
      <g stroke="#333">
        <path d="M278 552.500h15.500v24H278" fill="#a3a3a3" />
        <path d="M284.500 552.500v-4h12v117.500M293 552.500h3M284.500 576.500v4h12M293 576.500h12V666" />
        <path d="M411.500 552.500h117v24h-117z" fill="#a3a3a3" />
        <path d="M767.500 552.500h144V670h-24v-93.500h-120z" fill="#a3a3a3" />
        <path d="M420.500 552.500v-4h-12v32h12v-4M408.500 552.500h3M408.500 576.500h3M528 552.500h240M528 576.500h240" />
        <path d="M528 564.500h60v2M528 566.500h240M580.500 566.500v2h135v-2M708.500 566.500v-2h59M648.500 566v2" />
        <path d="M408.500 579L406.500 600L398.500 623L386 644L370 661L362 666" />
      </g>
      <circle cx="656" cy="425.500" r="27" fill="#f7f58e" opacity=".8" style={{ mixBlendMode: 'multiply' }} />
      <path d="M656.500 426v18l4.500-4 3 6.500 3-1.500-3-6h6z" fill="#fff" stroke="#222" />
    </g>
  </Drawing>
)

const DrawingView = () => (
  <View>
    <ViewTabs>
      <ViewTab $w={106}><Icon name="house" />{'{3D}'}</ViewTab>
      <ViewTab $w={162} $active><Icon name="sheet" />PLANTA BAIXA - TÉRREO<Icon name="close" size={12} /></ViewTab>
      <Spacer />
      <IconButton aria-label="Lista de vistas"><Icon name="customize" /></IconButton>
    </ViewTabs>
    <ViewBody>
      <Canvas>
        <Plan />
        <NavBar>
          <Svg width="21" height="76" viewBox="0 0 21 76">
            <g stroke="#aaa">
              <circle cx="17" cy="4" r="2" /><circle cx="17" cy="71" r="2" />
              <path d="M10 13a7 7 0 1 0 7 7v-3l-4-4z" fill="#e6e6ea" /><circle cx="10" cy="20" r="3.500" fill="#fff" />
              <path d="M1 37.500h19M5 44l7 7M11 44l-2 2M5 51l3-3" /><circle cx="13" cy="50" r="3" />
              <path d="M12 24h3v2h-3v2h3M17 24v4q3 0 3-2t-3-2" stroke="#5b84b5" />
            </g>
            <path d="M9 33h3l-1.500 2zM9 61h3l-1.500 2z" fill="#555" stroke="none" />
          </Svg>
        </NavBar>
      </Canvas>
      <Scroll>
        <Icon name="chevUp" size={13} />
        <Thumb $w={13} $h={13} />
        <Icon name="chevDown" size={13} />
      </Scroll>
    </ViewBody>
    <ViewBar>
      <Scale>1 : 75</Scale>
      <ViewTools>
        {['detailLevel', 'box', 'sun', 'shadow', 'crop', 'cropShow', 'glasses', 'bulb', 'film', 'analytic', 'constraint', 'chevLeft'].map(n => (
          <IconButton key={n} aria-label={n}><Icon name={n} /></IconButton>
        ))}
      </ViewTools>
      <Scroll $row>
        <Spacer /><Thumb $w={14} $h={13} /><Spacer />
        <Icon name="chevRight" />
      </Scroll>
      <Icon name="grip" />
    </ViewBar>
  </View>
)

/* ---------- project browser ---------- */

const Browser = styled.aside`
  position: relative;
  width: 234px;
  border-left: 1px solid #ccc;
  background: #fff;
  color: #222;
`
const BrowserTitle = styled(PaneTitle)`
  background: #eee;
`
const Tree = styled.ul`
  display: grid;
  grid-auto-rows: 1fr;
  height: 367px;
  margin: 0;
  padding: 0 0 0 2px;
  list-style: none;
`
const Item = styled.li`
  display: flex;
  align-items: center;
`
const Guide = styled.span`
  align-self: stretch;
  width: ${p => p.$w || 17}px;
  background: ${p => (p.$on ? 'repeating-linear-gradient(#c4c4c4 0 2px, #fff 2px 3px) 6px 0 / 1px 100% no-repeat' : 'none')};
`
const Toggle = styled.button`
  ${plainButton}
  width: 9px;
  height: 9px;
  margin: 0 0 0 2px;
  border: 1px solid #aaa;
  background:
    linear-gradient(#557, #557) center / 5px 1px no-repeat,
    linear-gradient(#557, #557) center / 1px ${p => (p.$open ? 0 : 5)}px no-repeat,
    #f4f4f8;
`
const Dash = styled.span`
  width: ${p => p.$w}px;
  height: 1px;
  margin: 0 1px;
  background: repeating-linear-gradient(90deg, #ccc 0 2px, transparent 2px 3px);
`
const Label = styled.span`
  padding: 0 1px;
  margin-left: ${p => (p.$icon ? 3 : 0)}px;
  background: ${p => (p.$current ? '#dfdfe3' : 'none')};
  color: ${p => (p.$current ? '#111' : 'inherit')};
  font-weight: ${p => (p.$current ? 700 : 400)};
  white-space: pre;
`
const Watermark = styled.svg`
  position: absolute;
  right: 10px;
  bottom: 2px;
`

// depth, state (- open, + closed, blank leaf), text, icon
const tree = [
  [0, '-', 'Vistas (Disciplina)', 'views'],
  [1, '-', 'Arquitetura'],
  [2, '-', 'Plantas de piso'],
  [3, '', 'PLANTA BAIXA - SUPERIOR'],
  [3, '', 'PLANTA BAIXA - TÉRREO'],
  [3, '', 'PLANTA DE COBERTURA'],
  [2, '+', 'Plantas de forro'],
  [2, '+', 'Vistas 3D'],
  [2, '+', 'Elevações (Elevação da construção)'],
  [2, '+', 'Vistas de desenho (Detalhe)'],
  [2, '-', 'Plantas de área (Área construída)'],
  [3, '', 'LOCAÇÃO - SUPERIOR'],
  [3, '', 'LOCAÇÃO - TÉRREO'],
  [0, '-', 'Legendas', 'legend'],
  [1, '', 'LEGENDA FASES'],
  [0, '+', 'Tabelas/Quantidades (todas)', 'grid'],
  [0, '-', 'Folhas (todas)', 'sheets'],
  [1, '+', '1 - ARQUITETÔNICO'],
  [1, '+', '2 - ARQUITETÔNICO'],
  [1, '+', '3 - ARQUITETÔNICO'],
  [1, '+', '26 - A4  Paisagem'],
  [1, '+', '27 - A4 Retrato'],
  [0, '+', 'Famílias', 'family'],
  [0, '+', 'Grupos', 'groups'],
  [0, '', 'Vínculos do Revit', 'link'],
]

const dashWidth = (state, icon) => {
  if (state) return icon ? 3 : 7
  return icon ? 7 : 11
}

const TreeItem = ({ depth, state, text, icon }) => {
  const guides = []
  for (let i = 0; i < depth; i++) guides.push(<Guide key={i} $on={i !== 1} />)
  return (
    <Item>
      {guides}
      {state ? <Toggle $open={state === '-'} aria-label={text} /> : <Guide $w={7} $on />}
      <Dash $w={dashWidth(state, icon)} />
      {icon && <Icon name={icon} />}
      <Label $icon={icon} $current={text === 'PLANTA BAIXA - TÉRREO'}>{text}</Label>
    </Item>
  )
}

const ProjectBrowser = () => (
  <Browser>
    <BrowserTitle>Navegador de projeto - Projeto3<IconButton aria-label="Fechar"><Icon name="close" /></IconButton></BrowserTitle>
    <Tree>
      {tree.map(([depth, state, text, icon]) => (
        <TreeItem key={text} depth={depth} state={state} text={text} icon={icon} />
      ))}
    </Tree>
    <Watermark width="168" height="134" viewBox="0 0 168 134" opacity=".88">
      <defs>
        <linearGradient id="kFill" x1="0" y1="0" x2="0.600" y2="1">
          <stop offset="0" stopColor="#dc3558" />
          <stop offset="1" stopColor="#f3aab6" />
        </linearGradient>
        <linearGradient id="sFill" x1="0" y1="0" x2="0.700" y2="1">
          <stop offset="0.150" stopColor="#f6c3ca" />
          <stop offset="1" stopColor="#e23a5c" />
        </linearGradient>
        <linearGradient id="wordFill">
          <stop offset="0" stopColor="#efb0bb" />
          <stop offset="1" stopColor="#dd4a66" />
        </linearGradient>
      </defs>
      <g fontFamily="DejaVu Sans" fontWeight="700" fontStyle="italic">
        <text x="36" y="81" fontSize="110" fill="url(#kFill)">K</text>
        <text x="86" y="127" fontSize="110" fill="url(#sFill)">S</text>
        <text x="2" y="108" fontSize="15" fill="url(#wordFill)">TREINAMENTO</text>
        <text x="30" y="125" fontSize="20" fill="url(#wordFill)">BIM</text>
      </g>
    </Watermark>
  </Browser>
)

/* ---------- status bar ---------- */

const StatusBar = styled.footer`
  display: flex;
  align-items: center;
  height: 20px;
  padding: 0 38px 0 1px;
  background: #c9c9c9;
  white-space: nowrap;
`
const StatusText = styled.span`
  width: 452px;
`
const StatusIcon = styled.button`
  ${plainButton}
  display: flex;
  align-items: center;
  justify-content: center;
  width: 20px;
`
const Count = styled.span`
  width: ${p => p.$w || 12}px;
`

const App = () => (
  <Window>
    <GlobalStyle />
    <TopBars />
    <Main>
      <PropertiesPane />
      <DrawingView />
      <ProjectBrowser />
    </Main>
    <StatusBar>
      <StatusText>Grupos de detalhe : Grupo de detalhes : FOGÃO 6B</StatusText>
      <StatusIcon aria-label="Worksets"><Icon name="worksets" /></StatusIcon>
      <SelectBox $w={170} $h={15} $bg="#fff">
        <Select aria-label="Workset ativo"><option> </option></Select>
        <Icon name="paleDown" />
      </SelectBox>
      <StatusIcon aria-label="Solicitações"><Icon name="editable" /></StatusIcon>
      <Count $w={22}>:0</Count>
      <StatusIcon aria-label="Opções de projeto"><Icon name="options" /></StatusIcon>
      <StatusIcon aria-label="Excluir opções"><Icon name="optionsOff" /></StatusIcon>
      <SelectBox $w={170} $h={15} $bg="#fff" $color="#888">
        <Select aria-label="Opção de projeto ativa"><option>Modelo principal</option></Select>
        <Icon name="paleDown" />
      </SelectBox>
      <Spacer />
      {['selLink', 'selUnder', 'selPin', 'selFace', 'selDrag', 'gear', 'filter'].map(n => (
        <StatusIcon key={n} aria-label={n}><Icon name={n} /></StatusIcon>
      ))}
      <Count>:0</Count>
    </StatusBar>
  </Window>
)

export default App
